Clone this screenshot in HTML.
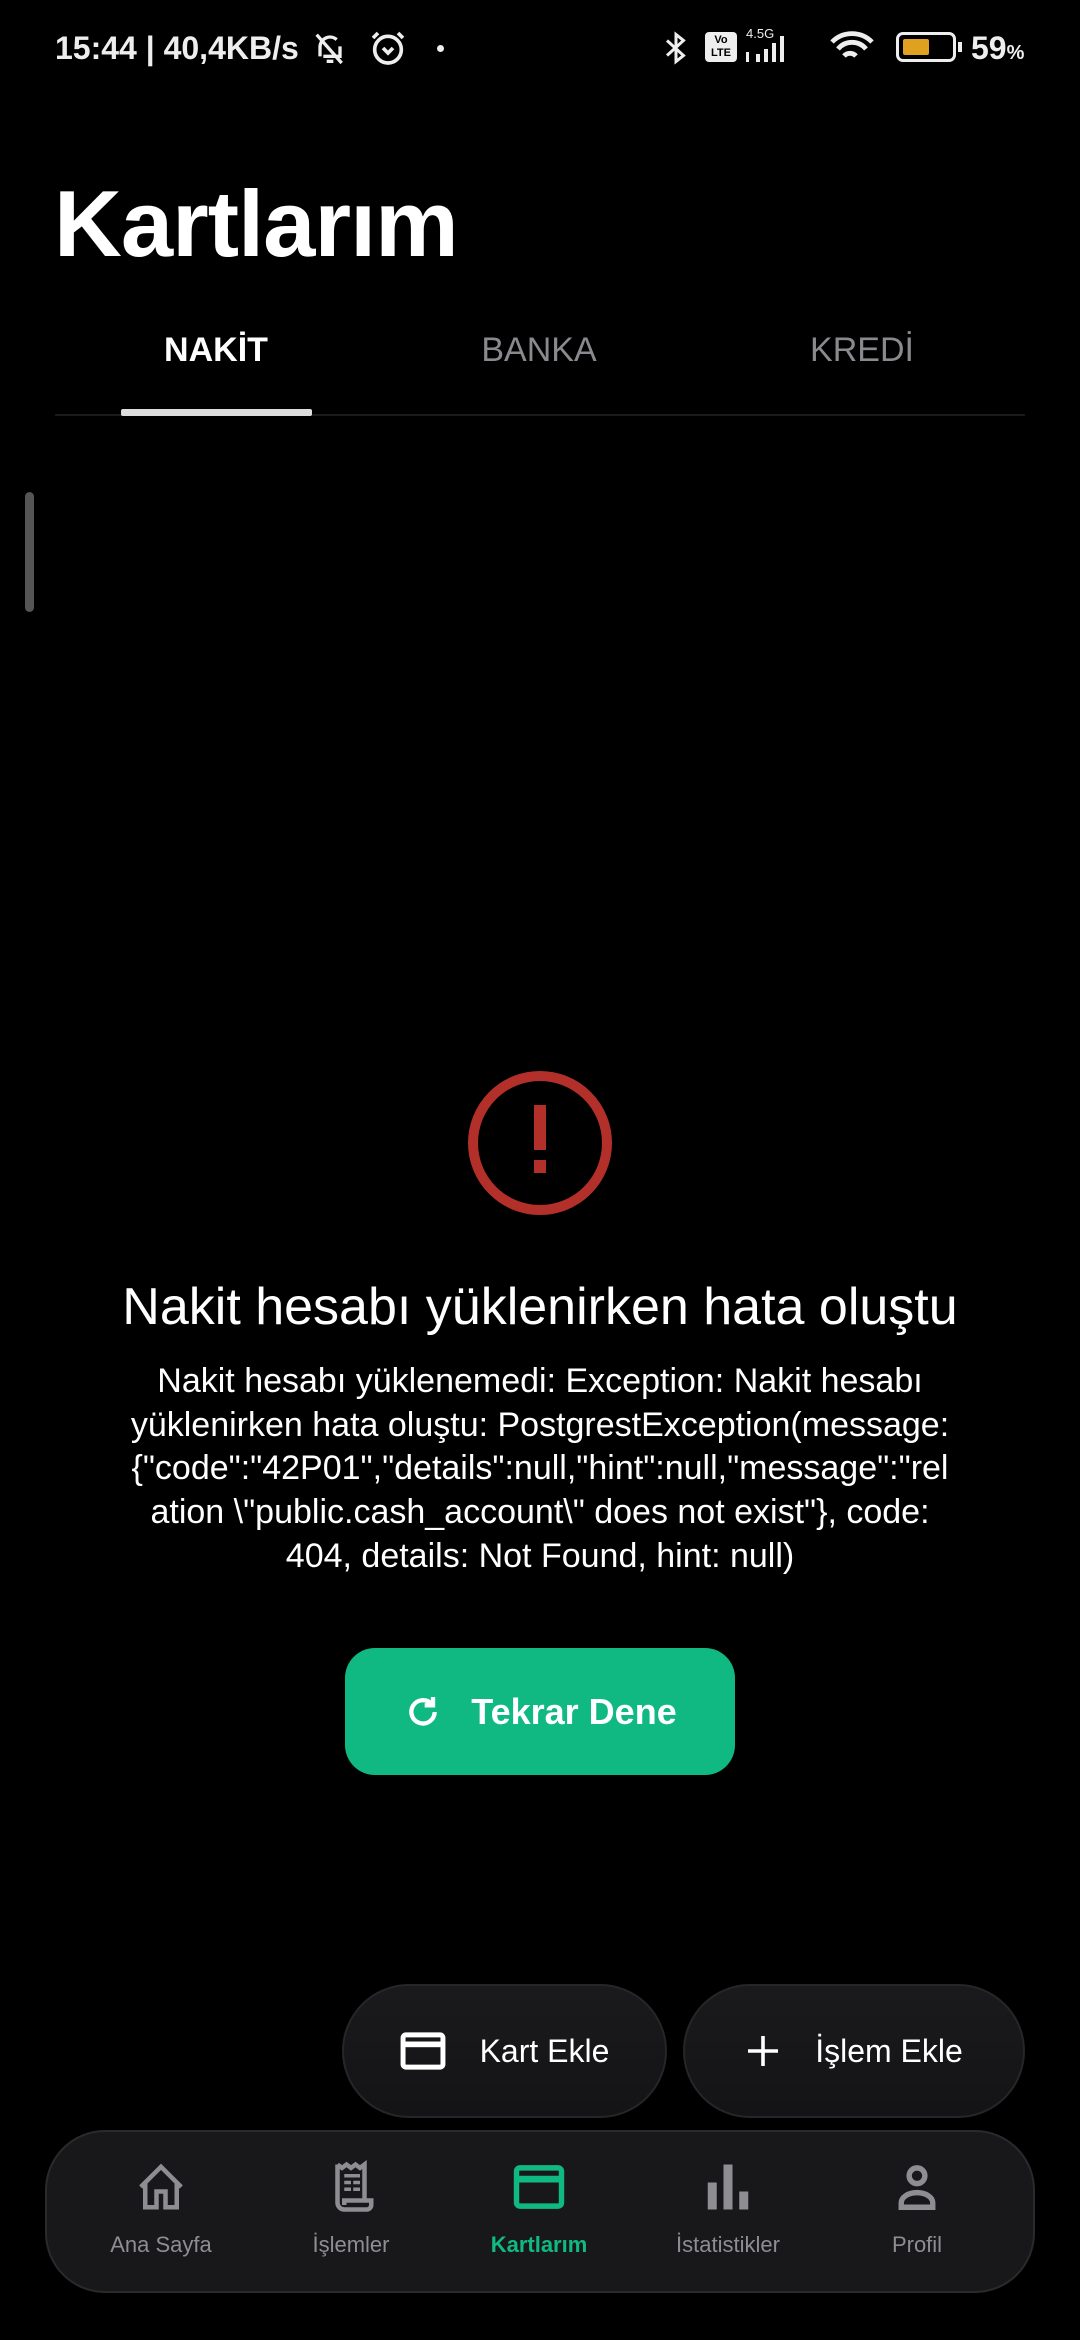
<!DOCTYPE html>
<html><head><meta charset="utf-8"><style>
*{margin:0;padding:0;box-sizing:border-box}
body{width:1080px;height:2340px;background:#000;position:relative;overflow:hidden;font-family:"Liberation Sans",sans-serif;color:#fff}
.a{position:absolute}
.sb{top:30px;font-size:32px;font-weight:bold;color:#eee}
.tab{top:331px;font-size:34px;width:300px;text-align:center;margin-left:-150px}
.body{left:0;width:1080px;text-align:center;font-size:34px;line-height:43.7px;top:1360px;white-space:nowrap}
.fab{background:linear-gradient(#1a1a1c,#141416);border:2px solid #262628;border-radius:67px;height:134px;top:1984px;display:flex;align-items:center;justify-content:center;font-size:32px;gap:34px}
.nav{left:45px;top:2130px;width:990px;height:163px;background:#18181a;border:2px solid #2a2a2c;border-radius:60px}
.it{top:2160px;width:190px;margin-left:-95px;text-align:center;color:#8e8e92;font-size:22px}
.it svg{display:block;margin:0 auto 18px}
</style></head><body>
<div class="a sb" style="left:55px">15:44 | 40,4KB/s</div>
<svg class="a" style="left:310px;top:28px" width="40" height="40" viewBox="0 0 24 24" fill="none" stroke="#eee" stroke-width="2"><path d="M6 17V11a6 6 0 0 1 10-4M18 11v6H8M10 20h4M4 4l15 17"/></svg>
<svg class="a" style="left:368px;top:28px" width="40" height="40" viewBox="0 0 24 24" fill="none" stroke="#eee" stroke-width="2.2"><circle cx="12" cy="13" r="8"/><path d="M9 12l3 3 3-3M3 6l3-3M21 6l-3-3"/></svg>
<div class="a" style="left:437px;top:45px;width:7px;height:7px;border-radius:50%;background:#eee"></div>
<svg class="a" style="left:658px;top:28px" width="36" height="40" viewBox="0 0 24 24" fill="none" stroke="#eee" stroke-width="2"><path d="M6 7l11 10-5 4V3l5 4L6 17"/></svg>
<div class="a" style="left:705px;top:32px;width:32px;height:30px;background:#eee;border-radius:4px;color:#000;font-size:11px;font-weight:bold;line-height:13px;text-align:center;padding-top:2px">Vo<br>LTE</div>
<div class="a" style="left:746px;top:26px;font-size:13px;color:#eee">4.5G</div>
<svg class="a" style="left:744px;top:32px" width="48" height="32" viewBox="0 0 48 32" fill="#eee"><rect x="12" y="22" width="4" height="8"/><rect x="20" y="17" width="4" height="13"/><rect x="28" y="11" width="4" height="19"/><rect x="36" y="4" width="4" height="26"/><rect x="2" y="20" width="3" height="10"/></svg>
<svg class="a" style="left:828px;top:28px" width="48" height="40" viewBox="0 0 24 20" fill="none" stroke="#eee" stroke-width="2.4"><path d="M2 7a14 14 0 0 1 20 0M5 10.5a9 9 0 0 1 14 0M8 14a4 4 0 0 1 6 0"/></svg>
<div class="a" style="left:896px;top:32px;width:60px;height:30px;border:3px solid #eee;border-radius:7px"><div style="margin:4px;width:26px;height:16px;background:#e0a020;border-radius:2px"></div></div>
<div class="a" style="left:958px;top:42px;width:4px;height:10px;background:#eee"></div>
<div class="a sb" style="left:971px">59<span style="font-size:20px">%</span></div>

<div class="a" style="left:54px;top:170px;font-size:94px;font-weight:bold;letter-spacing:-1px">Kartlarım</div>
<div class="a tab" style="left:216px;font-weight:bold">NAKİT</div>
<div class="a tab" style="left:539px;color:#8a8a8e">BANKA</div>
<div class="a tab" style="left:862px;color:#8a8a8e">KREDİ</div>
<div class="a" style="left:55px;top:414px;width:970px;height:2px;background:#1a1a1a"></div>
<div class="a" style="left:121px;top:409px;width:191px;height:7px;background:#ddd;border-radius:2px"></div>
<div class="a" style="left:25px;top:492px;width:9px;height:120px;background:#555;border-radius:5px"></div>

<svg class="a" style="left:465px;top:1068px" width="150" height="150" viewBox="0 0 150 150"><circle cx="75" cy="75" r="67" fill="none" stroke="#b3302a" stroke-width="10"/><rect x="69" y="37" width="12" height="45" fill="#b3302a"/><rect x="69" y="92" width="12" height="13" fill="#b3302a"/></svg>
<div class="a" style="left:0;width:1080px;text-align:center;top:1277px;font-size:52px;white-space:nowrap">Nakit hesabı yüklenirken hata oluştu</div>
<div class="a body">Nakit hesabı yüklenemedi: Exception: Nakit hesabı<br>yüklenirken hata oluştu: PostgrestException(message:<br>{"code":"42P01","details":null,"hint":null,"message":"rel<br>ation \"public.cash_account\" does not exist"}, code:<br>404, details: Not Found, hint: null)</div>

<div class="a" style="left:345px;top:1648px;width:390px;height:127px;background:#10b981;border-radius:30px;display:flex;align-items:center;justify-content:center;gap:28px;font-size:36px;font-weight:bold">
<svg width="40" height="40" viewBox="0 0 24 24" fill="none" stroke="#fff" stroke-width="2.6"><path d="M19 12a7 7 0 1 1-2-5"/><path d="M18 3v5h-5" /></svg>Tekrar Dene</div>

<div class="a fab" style="left:342px;width:325px"><svg width="46" height="38" viewBox="0 0 24 20"><rect x="1.5" y="1.5" width="21" height="17" rx="1.5" fill="none" stroke="#fff" stroke-width="2.6"/><rect x="2" y="5" width="20" height="3" fill="#fff"/></svg>Kart Ekle</div>
<div class="a fab" style="left:683px;width:342px"><svg width="36" height="36" viewBox="0 0 24 24" stroke="#fff" stroke-width="2.4"><path d="M12 2v20M2 12h20"/></svg>İşlem Ekle</div>

<div class="a nav"></div>
<div class="a it" style="left:161px"><svg width="54" height="54" viewBox="0 0 24 24" fill="none" stroke="#8e8e92" stroke-width="2"><path d="M3 12L12 3l9 9M5 10v11h5v-7h4v7h5V10"/></svg>Ana Sayfa</div>
<div class="a it" style="left:351px"><svg width="54" height="54" viewBox="0 0 24 24" fill="none" stroke="#8e8e92" stroke-width="2"><path d="M6 2v17a3 3 0 0 0 3 3h10a2 2 0 0 0 2-2v-2H9v2M18 18V2l-2 1.5L14 2l-2 1.5L10 2 8 3.5 6 2"/><path d="M9 7h7M9 10h3M13 10h3M9 13h3M13 13h3" stroke-width="1.6"/></svg>İşlemler</div>
<div class="a it" style="left:539px;color:#10b981;font-weight:bold"><svg width="56" height="54" viewBox="0 0 24 24"><rect x="2" y="3.5" width="20" height="17" rx="1.5" fill="none" stroke="#10b981" stroke-width="2.4"/><rect x="2" y="7" width="20" height="3" fill="#10b981"/></svg>Kartlarım</div>
<div class="a it" style="left:728px"><svg width="54" height="54" viewBox="0 0 24 24" fill="#8e8e92"><rect x="3" y="10" width="4" height="12"/><rect x="10" y="2" width="4" height="20"/><rect x="17" y="14" width="4" height="8"/></svg>İstatistikler</div>
<div class="a it" style="left:917px"><svg width="54" height="54" viewBox="0 0 24 24" fill="none" stroke="#8e8e92" stroke-width="2.4"><circle cx="12" cy="7" r="3.5"/><path d="M5 21v-2a7 4.5 0 0 1 14 0v2z"/></svg>Profil</div>
</body></html>
